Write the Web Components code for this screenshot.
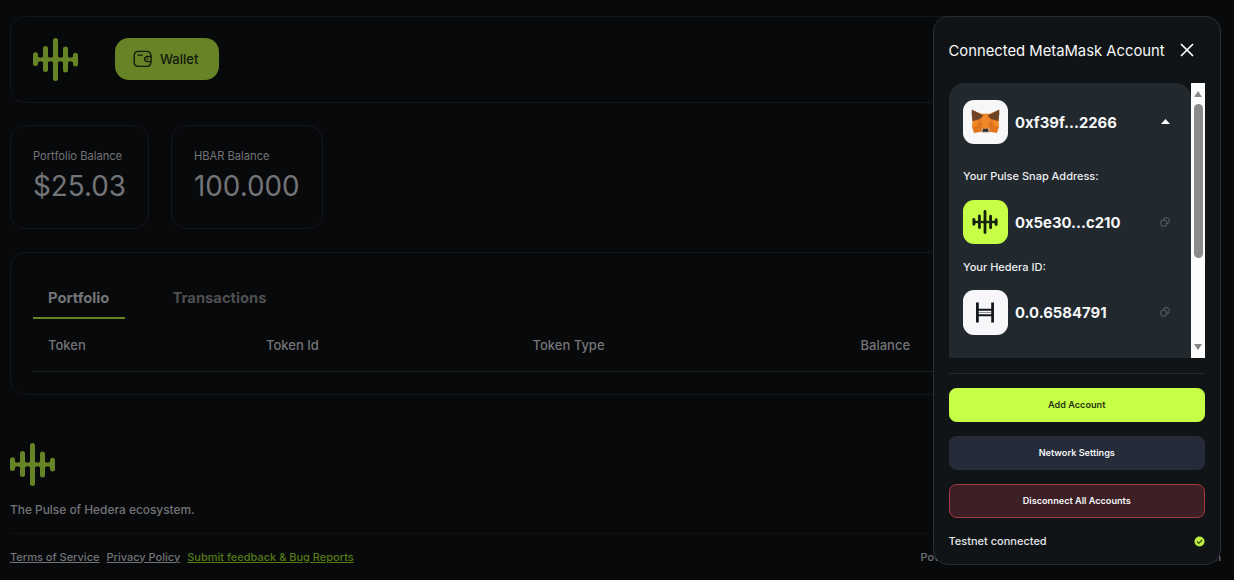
<!DOCTYPE html>
<html lang="en">
<head>
<meta charset="utf-8">
<title>Pulse</title>
<style>
html,body{margin:0;height:100%;overflow:hidden;background:#08090b}
body{font-family:Inter,"Liberation Sans",sans-serif;color:#737477;-webkit-font-smoothing:antialiased}
</style>
</head>
<body>
<pulse-app></pulse-app>
<script>
function define(name, html) {
  const t = document.createElement('template');
  t.innerHTML = html;
  customElements.define(name, class extends HTMLElement {
    constructor() {
      super();
      this.attachShadow({mode: 'open'}).append(t.content.cloneNode(true));
    }
  });
}

define('pulse-logo', `
<style>:host{display:block;width:45px;height:43px;color:#668326}svg{display:block;width:100%;height:100%}</style>
<svg viewBox="0 0 45 43" fill="currentColor">
<rect x="0" y="14.3" width="5" height="13.8" rx="2.5"/><rect x="10" y="8" width="5" height="26" rx="2.5"/>
<rect x="20" y="0" width="5" height="43" rx="2.5"/><rect x="30" y="8.5" width="5" height="26" rx="2.5"/>
<rect x="40" y="14.8" width="5" height="13.8" rx="2.5"/>
<path d="M4.5 18Q5.500 19.800 7.500 19.800Q9.500 19.800 10.500 18V25Q9.500 23.200 7.500 23.200Q5.500 23.200 4.500 25ZM14.500 18Q15.500 19.800 17.500 19.800Q19.500 19.800 20.500 18V25Q19.500 23.200 17.500 23.200Q15.500 23.200 14.500 25ZM24.500 18Q25.500 19.800 27.500 19.800Q29.500 19.800 30.500 18V25Q29.500 23.200 27.500 23.200Q25.500 23.200 24.500 25ZM34.500 18Q35.500 19.800 37.500 19.800Q39.500 19.800 40.500 18V25Q39.500 23.200 37.500 23.200Q35.500 23.200 34.500 25Z"/>
</svg>`);

define('wallet-button', `
<style>:host{display:flex;box-sizing:border-box;width:104.5px;height:42.5px;border-radius:14px;background:#668326;color:#13190c;align-items:center;padding-left:18px;gap:8px;font-size:13px;font-weight:500}svg{width:19.5px;height:18px;flex:none}</style>
<svg viewBox="0 0 20 18" fill="none" stroke="currentColor" stroke-width="1.4" stroke-linecap="round" stroke-linejoin="round">
<path d="M18.500 6.300V5.600Q18.200 1.200 13.800 1.200H5.800Q1.200 1.200 1.200 5.800V12Q1.200 16.600 5.800 16.600H13.800Q18.200 16.600 18.500 12.200V11.800M5.200 5H9.500M18.600 6.400H14.600Q12 6.800 12 9T14.600 11.700H18.600ZM14.800 9H15.100"/></svg>
<slot></slot>`);

define('app-header', `
<style>:host{display:flex;box-sizing:border-box;height:87px;border:1px solid #14171a;border-radius:15px;padding:0 22px;align-items:center;gap:36.5px}</style>
<pulse-logo></pulse-logo><wallet-button>Wallet</wallet-button>`);

define('balance-card', `
<style>:host{display:block;box-sizing:border-box;height:104px;border:1px solid #14171a;border-radius:15px;padding:22px}
.l{font-size:11.15px;line-height:17px}.v{font-size:27.8px;line-height:42px}</style>
<div class="l"><slot name="label"></slot></div><div class="v"><slot></slot></div>`);

define('token-table', `
<style>
:host{display:block;box-sizing:border-box;height:143.5px;border:1px solid #14171a;border-radius:15px;padding:22px 22px 0}
.tabs{display:flex;gap:32.5px;font-size:14.75px;font-weight:700;line-height:46px;height:44.5px}
.tabs span{box-sizing:border-box;padding:0 15px;height:44.5px;border-bottom:2px solid transparent;color:#4e4f51}
.tabs .on{width:92px;border-color:#668326;color:#737477}
.head{display:grid;grid-template-columns:218px 266.500px 328px 1fr;padding-left:15px;font-size:13px;font-weight:500;line-height:52px;height:52px;border-bottom:1px solid #20241f}
</style>
<div class="tabs"><span class="on">Portfolio</span><span>Transactions</span></div>
<div class="head"><span>Token</span><span>Token Id</span><span>Token Type</span><span>Balance</span></div>`);

define('app-footer', `
<style>
:host{display:block}
p{margin:14.5px 0 0;font-size:11.9px;line-height:18px;font-weight:500}
.bar{margin-top:14.5px;border-top:1px solid #0f1113;padding-top:13.5px;display:flex;font-size:11px;line-height:18px;font-weight:500;white-space:nowrap}
nav{display:flex;gap:7px;width:910.5px}a{text-decoration:underline}.g{color:#557a16}
.by{flex:1;display:flex;justify-content:space-between}
</style>
<pulse-logo></pulse-logo><p>The Pulse of Hedera ecosystem.</p>
<div class="bar"><nav><a>Terms of Service</a><a>Privacy Policy</a><a class="g">Submit feedback &amp; Bug Reports</a></nav><span class="by"><span>Powered by</span><span>Tuum Tech</span></span></div>`);

define('fox-icon', `
<style>:host{display:block}svg{display:block}</style>
<svg width="29" height="26" viewBox="0 0 28 27" preserveAspectRatio="none">
<path fill="#e2771f" d="M1 1 10 5H18L27 1 27 12 26 14 27 19 25 25 18 23.500 16 25H12L10 23.500 3 25 1 19 2 14 1 12Z"/>
<path fill="#f08828" d="M11 6H17L19 11 17 22H11L9 11ZM1.500 13 8 11.500 5 18H1ZM26.500 13 20 11.500 23 18H27Z"/>
<path fill="#6d4428" d="M.8.5 12 7 8.600 10.500 1.600 12.500 .6 5ZM27.200.5 16 7 19.400 10.500 26.400 12.500 27.400 5Z"/>
<path fill="#c96a24" d="M7.500 14 11 15 10 16.500ZM20.500 14 17 15 18 16.500Z"/>
<path fill="#dc7420" d="M4 19 10 18.500 11 22 4 24ZM24 19 18 18.500 17 22 24 24Z"/>
<path fill="#d8c6b5" d="M10 20.500H18L17 25H11Z"/><path fill="#292c30" d="M11.500 20.500H16.500L17 23.500H11Z"/></svg>`);

define('hedera-icon', `
<style>:host{display:block}svg{display:block}</style>
<svg width="20" height="21" viewBox="0 0 20 21"><path fill="none" stroke="#15191c" stroke-width="2.800" d="M2.400.500V20.500M17.600.500V20.500"/><path stroke="#15191c" stroke-width="1.900" d="M2 7.800H18M2 13.200H18"/><path stroke="#8e9193" stroke-width="1" d="M4 10.500H16"/></svg>`);

define('account-row', `
<style>
:host{display:flex;align-items:center;height:44.5px;color:#f6f7f9;font-size:14.850px;font-weight:700}
.i{width:44.5px;height:44.5px;border-radius:11px;background:var(--tile,#f7f7f9);display:flex;align-items:center;justify-content:center;margin-right:7.5px;flex:none}
.t{flex:1;padding-top:2px}.a{display:flex}
</style>
<div class="i"><slot name="icon"></slot></div><span class="t"><slot></slot></span><span class="a"><slot name="action"></slot></span>`);

define('copy-icon', `
<style>:host{display:block}svg{display:block}</style>
<svg width="10" height="10" viewBox="0 0 10 10" fill="none" stroke="#626970" stroke-width=".9"><rect x=".8" y="3.300" width="5.800" height="5.800" rx="1.800"/><path d="M3.500 3V2.500Q3.500.800 5.300.800H7.200Q9.100.800 9.100 2.700V4.600Q9.100 6.500 7 6.500"/></svg>`);

define('scroll-bar', `
<style>:host{display:flex;flex-direction:column;align-items:center;width:14px;background:#fcfcfc}
.up,.dn{width:0;border:4.500px solid transparent}.up{border-top:0;border-bottom:6px solid #8b8b8b;margin:8px 0 7px}
.dn{border-bottom:0;border-top:6px solid #858585;margin:auto 0 8px}.th{width:9px;height:154px;border-radius:5px;background:#8b8b8b}</style>
<div class="up"></div><div class="th"></div><div class="dn"></div>`);

define('account-list', `
<style>
:host{display:flex;height:275px}
.box{flex:1;box-sizing:border-box;background:#22292e;border-radius:15px 15px 0 0;padding:16.500px 21px 0 14.5px}
p{margin:0;color:#eceef0;font-size:11px;line-height:17px;font-weight:500}
pulse-logo{width:26px;height:24px;color:#15220b}
</style>
<div class="box">
<account-row><fox-icon slot="icon"></fox-icon>0xf39f...2266<svg slot="action" width="9" height="5" viewBox="0 0 9 5"><path fill="#fff" d="M0 5 4.500 0 9 5Z"/></svg></account-row>
<p style="margin:24px 0 14.5px">Your Pulse Snap Address:</p>
<account-row style="--tile:#c6ff45"><pulse-logo slot="icon"></pulse-logo>0x5e30...c210<copy-icon slot="action"></copy-icon></account-row>
<p style="margin:14.5px 0">Your Hedera ID:</p>
<account-row><hedera-icon slot="icon"></hedera-icon>0.0.6584791<copy-icon slot="action"></copy-icon></account-row>
</div><scroll-bar></scroll-bar>`);

define('panel-button', `
<style>:host{display:flex;box-sizing:border-box;height:34px;align-items:center;justify-content:center;border-radius:7.500px;font-size:9.150px;line-height:10px;padding-bottom:1px;font-weight:600;color:#f4f5f7;background:#252b38;margin-bottom:14px;border:1px solid #272d39}
:host([kind=primary]){background:#c6ff45;border-color:#c6ff45;color:#28340e}
:host([kind=danger]){background:#3d1f26;border-color:#a53a45}</style><slot></slot>`);

define('account-panel', `
<style>
:host{display:block;position:absolute;left:933px;top:15.500px;width:288px;height:549.5px;box-sizing:border-box;background:#101416;border:1px solid #292d34;border-radius:15px;padding:0 15px 0 14.500px}
header{display:flex;align-items:center;justify-content:space-between;height:66.5px;padding-right:11px;color:#f7f8f9;font-size:14.8px;white-space:nowrap}
header span{padding-top:1.5px}
hr{border:0;height:1px;background:#252a2d;margin:14.5px 0 14.500px}
.s{display:flex;justify-content:space-between;align-items:center;font-size:11px;font-weight:500;color:#e4e6e8;line-height:18px}
</style>
<header><span>Connected MetaMask Account</span><svg width="14" height="14" viewBox="0 0 14 14"><path d="M1 1 13 13M13 1 1 13" stroke="#fff" stroke-width="1.700"/></svg></header>
<account-list></account-list><hr>
<panel-button kind="primary">Add Account</panel-button><panel-button>Network Settings</panel-button><panel-button kind="danger">Disconnect All Accounts</panel-button>
<div class="s"><span>Testnet connected</span><svg width="11" height="11" viewBox="0 0 11 11"><circle cx="5.500" cy="5.500" r="5" fill="#bdf044"/><path d="M3 5.500 4.800 7.300 8 4" fill="none" stroke="#35470f" stroke-width="1.200"/></svg></div>`);

define('pulse-app', `
<style>
:host{display:block;position:relative;height:580px;overflow:hidden}
main{padding:15.500px 13px 0 10px}
.cards{display:flex;gap:22px;margin:22.500px 0}
token-table{margin-bottom:48px}
</style>
<main><app-header></app-header>
<div class="cards"><balance-card style="width:139px"><span slot="label">Portfolio Balance</span>$25.03</balance-card><balance-card style="width:152px"><span slot="label">HBAR Balance</span>100.000</balance-card></div>
<token-table></token-table><app-footer></app-footer></main>
<account-panel></account-panel>`);
</script>
</body>
</html>
